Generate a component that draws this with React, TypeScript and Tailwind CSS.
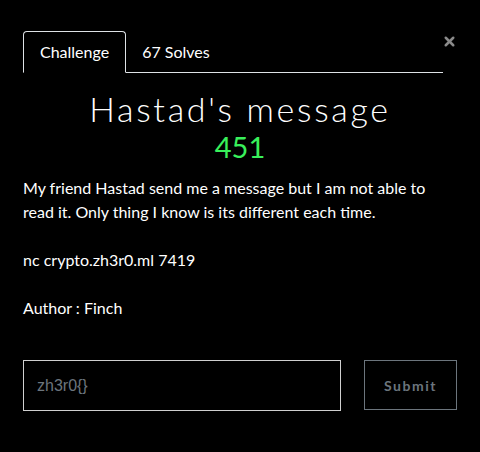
import { X } from 'lucide-react';

export default function App() {
  return (
    <div className="min-h-[452px] w-[480px] bg-black text-white font-['Lato',sans-serif] relative">
      <button className="absolute right-[23px] top-[34px] text-[#8a8a8a]" aria-label="Close">
        <X className="w-[15px] h-[15px]" strokeWidth={4} />
      </button>
      <div className="pl-[23px] pr-[23px] pt-[31px]">
        {/* Tabs */}
        <div className="flex w-[420px] border-b border-[#dee2e6] text-[16px]">
          <div className="-mb-px border border-[#dee2e6] border-b-black rounded-t-[4px] px-[16px] h-[42px] flex items-center">
            Challenge
          </div>
          <div className="px-[16px] h-[41px] flex items-center">67 Solves</div>
        </div>

        <h1 className="text-center font-['Lato',sans-serif] font-light text-[34px] leading-[40px] mt-[16px] tracking-[2.7px]">
          Hastad's message
        </h1>
        <div className="text-center text-[#39f05b] text-[29px] leading-[34px] mt-[1px]">451</div>

        <div className="mt-[12px] text-[16px] leading-[24px]">
          <p className="mb-[24px]">
            My friend Hastad send me a message but I am not able to read it. Only thing I know is its different each time.
          </p>
          <p className="mb-[24px]">nc crypto.zh3r0.ml 7419</p>
          <p>Author : Finch</p>
        </div>

        <div className="flex mt-[40px] gap-[23px]">
          <input
            placeholder="zh3r0{}"
            className="w-[318px] h-[51px] bg-black border-[1.5px] border-[#d0d0d0] px-[13px] text-[16px] text-white placeholder:text-[#6c757d] font-['Liberation_Sans',sans-serif] outline-none"
          />
          <button className="w-[93px] h-[50px] border border-[#6c757d] text-[#6c757d] font-bold text-[14px] tracking-[1.5px]">
            Submit
          </button>
        </div>
      </div>
    </div>
  );
}
